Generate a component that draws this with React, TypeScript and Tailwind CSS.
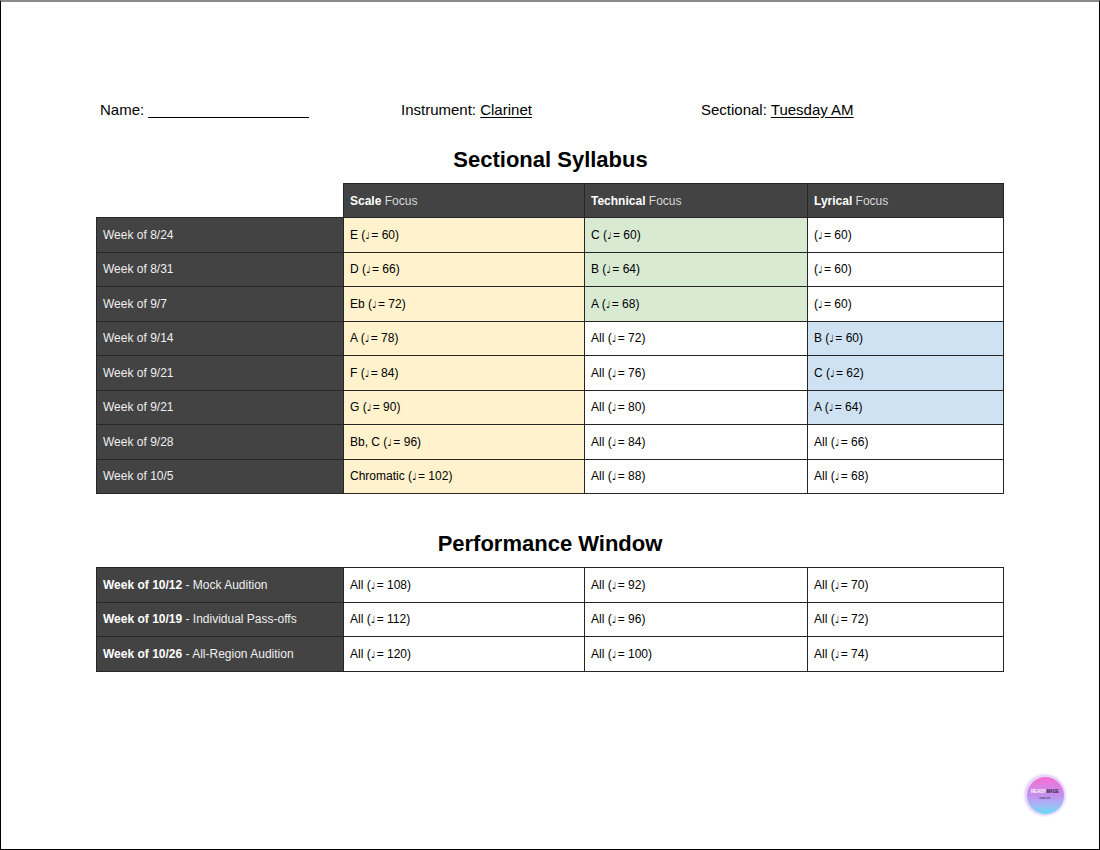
const NOTE = "\u2669";

const Y = "bg-[#fff2cc]";
const G = "bg-[#d9ead3]";
const B = "bg-[#cfe2f3]";
const W = "bg-white";

function Tempo({ pre, n }: { pre: string; n: number }) {
  return (
    <>
      {pre}(<span className="inline-block w-[6px] overflow-visible font-['DejaVu_Sans',sans-serif] text-[10px]">{NOTE}</span>= {n})
    </>
  );
}

const rows = [
  { week: "Week of 8/24", s: ["E ", 60], te: ["C ", 60], l: ["", 60], sb: Y, tb: G, lb: W },
  { week: "Week of 8/31", s: ["D ", 66], te: ["B ", 64], l: ["", 60], sb: Y, tb: G, lb: W },
  { week: "Week of 9/7", s: ["Eb ", 72], te: ["A ", 68], l: ["", 60], sb: Y, tb: G, lb: W },
  { week: "Week of 9/14", s: ["A ", 78], te: ["All ", 72], l: ["B ", 60], sb: Y, tb: W, lb: B },
  { week: "Week of 9/21", s: ["F ", 84], te: ["All ", 76], l: ["C ", 62], sb: Y, tb: W, lb: B },
  { week: "Week of 9/21", s: ["G ", 90], te: ["All ", 80], l: ["A ", 64], sb: Y, tb: W, lb: B },
  { week: "Week of 9/28", s: ["Bb, C ", 96], te: ["All ", 84], l: ["All ", 66], sb: Y, tb: W, lb: W },
  { week: "Week of 10/5", s: ["Chromatic ", 102], te: ["All ", 88], l: ["All ", 68], sb: Y, tb: W, lb: W },
] as const;

const perf = [
  { wk: "Week of 10/12", label: "Mock Audition", s: 108, te: 92, l: 70 },
  { wk: "Week of 10/19", label: "Individual Pass-offs", s: 112, te: 96, l: 72 },
  { wk: "Week of 10/26", label: "All-Region Audition", s: 120, te: 100, l: 74 },
];

const cell = "border-[1.5px] border-[#262626] h-[34.5px] px-[6px] text-[12px] leading-none align-middle";
const dark = "bg-[#434343] text-[#efefef]";

function Cols() {
  return (
    <colgroup>
      <col className="w-[247px]" />
      <col className="w-[241px]" />
      <col className="w-[223px]" />
      <col className="w-[196px]" />
    </colgroup>
  );
}

function Logo() {
  return (
    <div className="w-[40px] h-[40px] rounded-full p-[1.5px] bg-[#e9d6f7] shadow-[0_0_3px_#c9b8ff]">
      <div className="w-full h-full rounded-full bg-gradient-to-b from-[#f36dd2] via-[#c58ff0] to-[#5fdcf6] flex flex-col items-center justify-center leading-none">
        <span className="text-[4.5px] font-bold text-white tracking-tight">READY<span className="text-[#2a2a4a]">MADE</span></span>
        <span className="text-[5px] italic text-[#2a2a4a] font-['Liberation_Serif',serif]">music</span>
      </div>
    </div>
  );
}

export default function App() {
  return (
    <div className="w-[1100px] h-[850px] bg-white border-l border-r border-b border-black border-t-2 border-t-[#8a8a8a] relative font-['Liberation_Sans','DejaVu_Sans',sans-serif] text-black overflow-hidden">
      <div className="flex pt-[99px] pl-[99px] text-[15px] leading-[18px]">
        <div className="w-[301px]">
          Name: <span className="inline-block w-[161px] border-b border-black h-[15px] align-baseline -mb-[3px]"></span>
        </div>
        <div className="w-[300px]">
          Instrument: <span className="underline underline-offset-2">Clarinet</span>
        </div>
        <div>
          Sectional: <span className="underline underline-offset-2">Tuesday AM</span>
        </div>
      </div>

      <h1 className="text-center text-[22px] font-bold mt-[28px] leading-[26px] pl-[1px]">Sectional Syllabus</h1>

      <table className="mt-[10px] ml-[95px] border-collapse table-fixed w-[908px]">
        <Cols />
        <tbody>
          <tr>
            <td className="h-[34px]"></td>
            {["Scale", "Technical", "Lyrical"].map((h) => (
              <td key={h} className={`${cell} ${dark} h-[34px]`}>
                <span className="font-bold text-white">{h}</span> <span className="text-[#d9d9d9]">Focus</span>
              </td>
            ))}
          </tr>
          {rows.map((r, i) => (
            <tr key={i}>
              <td className={`${cell} ${dark}`}>{r.week}</td>
              <td className={`${cell} ${r.sb}`}><Tempo pre={r.s[0]} n={r.s[1]} /></td>
              <td className={`${cell} ${r.tb}`}><Tempo pre={r.te[0]} n={r.te[1]} /></td>
              <td className={`${cell} ${r.lb}`}><Tempo pre={r.l[0]} n={r.l[1]} /></td>
            </tr>
          ))}
        </tbody>
      </table>

      <h2 className="text-center text-[22px] font-bold mt-[37px] leading-[26px]">Performance Window</h2>

      <table className="mt-[10px] ml-[95px] border-collapse table-fixed w-[908px]">
        <Cols />
        <tbody>
          {perf.map((r, i) => (
            <tr key={i}>
              <td className={`${cell} ${dark}`}>
                <span className="font-bold text-white">{r.wk}</span> - {r.label}
              </td>
              <td className={`${cell} bg-white`}><Tempo pre="All " n={r.s} /></td>
              <td className={`${cell} bg-white`}><Tempo pre="All " n={r.te} /></td>
              <td className={`${cell} bg-white`}><Tempo pre="All " n={r.l} /></td>
            </tr>
          ))}
        </tbody>
      </table>

      <div className="absolute left-[1024px] top-[773px]">
        <Logo />
      </div>
    </div>
  );
}
